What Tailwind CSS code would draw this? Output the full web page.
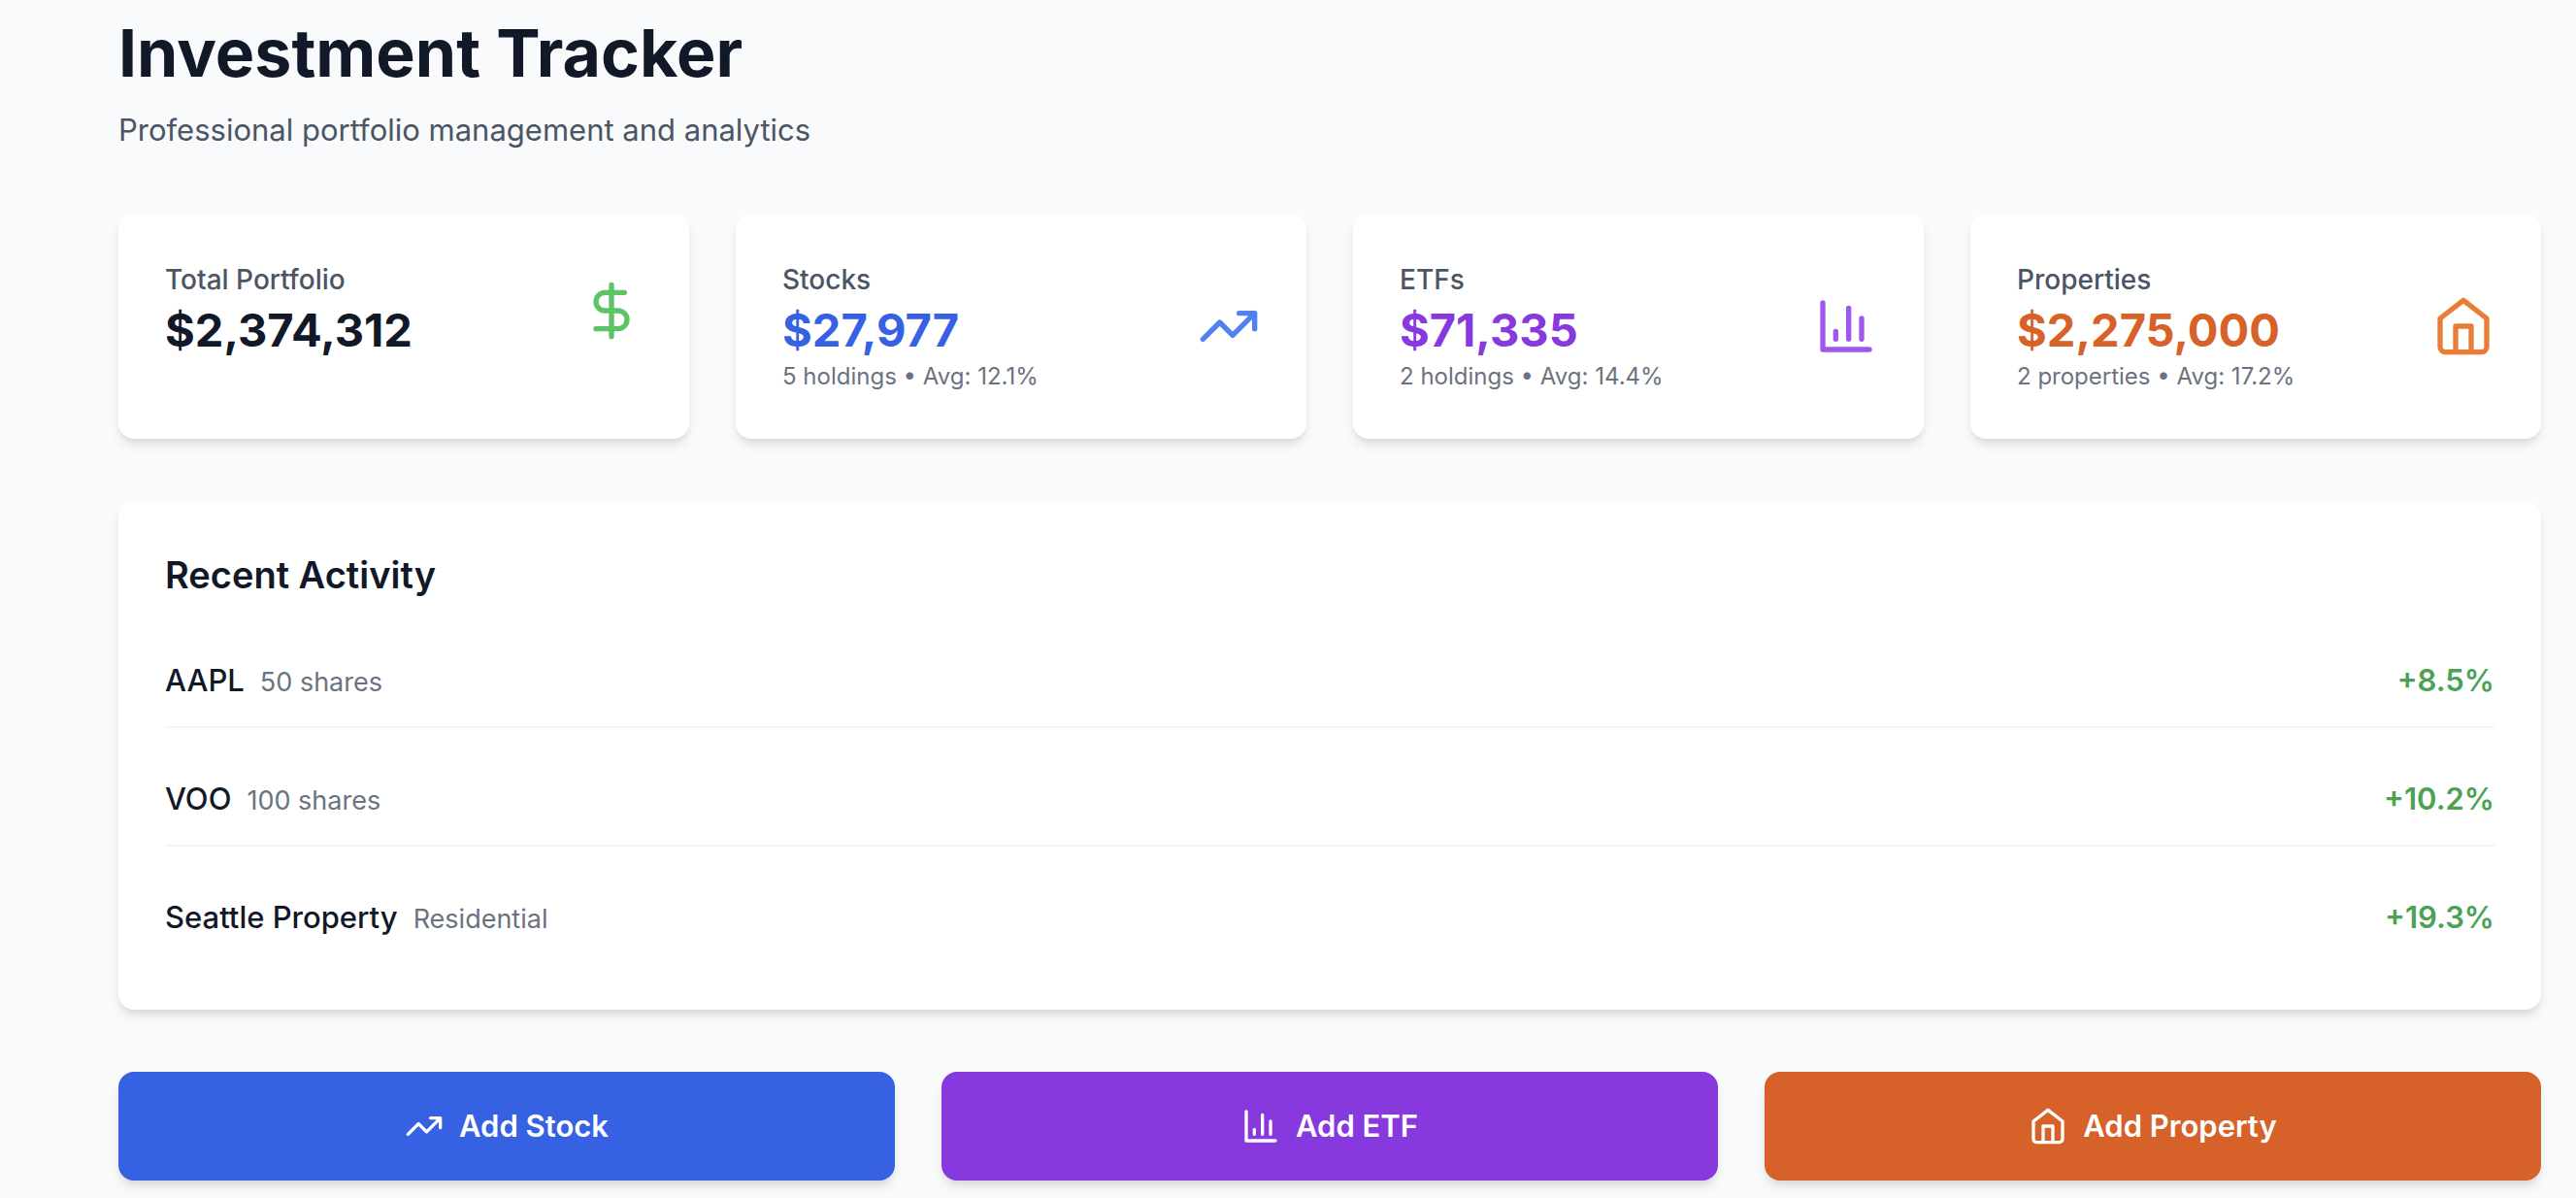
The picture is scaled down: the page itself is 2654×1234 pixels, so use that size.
<!DOCTYPE html>
<html lang="en">
<head>
<meta charset="utf-8">
<meta name="viewport" content="width=device-width, initial-scale=1">
<title>Investment Tracker</title>
<script src="https://cdn.jsdelivr.net/npm/@tailwindcss/browser@4"></script>
</head>
<body class="min-h-screen bg-[#f9fafc] font-['Inter',sans-serif] text-[#111827]">
<svg class="hidden" aria-hidden="true">
  <symbol id="dollar" viewBox="0 0 24 24"><path d="M12 2v20M17 5H9.500a3.500 3.500 0 0 0 0 7h5a3.500 3.500 0 0 1 0 7H6"/></symbol>
  <symbol id="trend" viewBox="0 0 24 24"><path d="M22 7l-8.500 8.500-5-5L2 17M16 7h6v6"/></symbol>
  <symbol id="chart" viewBox="0 0 24 24"><path d="M3 3v18h18M18 17V9M13 17V5M8 17v-3"/></symbol>
  <symbol id="home" viewBox="0 0 24 24"><path d="m3 9 9-7 9 7v11a2 2 0 0 1-2 2H5a2 2 0 0 1-2-2zM9 22V12h6v10"/></symbol>
</svg>
<main class="pt-[14px] pr-9 pb-4 pl-[122px]">
  <header class="mb-[62px]">
    <h1 class="mb-4 text-[68px] leading-[80px] font-bold">Investment Tracker</h1>
    <p class="text-[31px] leading-[48px] text-[#4b5563]">Professional portfolio management and analytics</p>
  </header>

  <section class="mb-16 grid grid-cols-4 gap-12" aria-label="Portfolio summary">
    <article class="rounded-2xl bg-white p-12 shadow-[0_8px_12px_-2px_rgb(0_0_0/0.1),0_4px_8px_-4px_rgb(0_0_0/0.1)]">
      <div class="flex items-center justify-between">
        <div>
          <h2 class="text-[28px] leading-[40px] font-medium text-[#4b5563]">Total Portfolio</h2>
          <p class="text-[47px] leading-[64px] font-bold">$2,374,312</p>
        </div>
        <svg class="size-16 fill-none stroke-[#5dc367] stroke-2 [stroke-linecap:round] [stroke-linejoin:round]" aria-hidden="true"><use href="#dollar"/></svg>
      </div>
    </article>
    <article class="rounded-2xl bg-white p-12 shadow-[0_8px_12px_-2px_rgb(0_0_0/0.1),0_4px_8px_-4px_rgb(0_0_0/0.1)]">
      <div class="flex items-center justify-between">
        <div>
          <h2 class="text-[28px] leading-[40px] font-medium text-[#4b5563]">Stocks</h2>
          <p class="text-[47px] leading-[64px] font-bold text-[#3761e3]">$27,977</p>
          <p class="text-[24px] leading-[32px] text-[#6b7280]">5 holdings • Avg: 12.1%</p>
        </div>
        <svg class="size-16 fill-none stroke-[#4f81ef] stroke-2 [stroke-linecap:round] [stroke-linejoin:round]" aria-hidden="true"><use href="#trend"/></svg>
      </div>
    </article>
    <article class="rounded-2xl bg-white p-12 shadow-[0_8px_12px_-2px_rgb(0_0_0/0.1),0_4px_8px_-4px_rgb(0_0_0/0.1)]">
      <div class="flex items-center justify-between">
        <div>
          <h2 class="text-[28px] leading-[40px] font-medium text-[#4b5563]">ETFs</h2>
          <p class="text-[47px] leading-[64px] font-bold text-[#8839de]">$71,335</p>
          <p class="text-[24px] leading-[32px] text-[#6b7280]">2 holdings • Avg: 14.4%</p>
        </div>
        <svg class="size-16 fill-none stroke-[#9f57f1] stroke-2 [stroke-linecap:round] [stroke-linejoin:round]" aria-hidden="true"><use href="#chart"/></svg>
      </div>
    </article>
    <article class="rounded-2xl bg-white p-12 shadow-[0_8px_12px_-2px_rgb(0_0_0/0.1),0_4px_8px_-4px_rgb(0_0_0/0.1)]">
      <div class="flex items-center justify-between">
        <div>
          <h2 class="text-[28px] leading-[40px] font-medium text-[#4b5563]">Properties</h2>
          <p class="text-[47px] leading-[64px] font-bold text-[#d76229]">$2,275,000</p>
          <p class="text-[24px] leading-[32px] text-[#6b7280]">2 properties • Avg: 17.2%</p>
        </div>
        <svg class="size-16 fill-none stroke-[#e97d35] stroke-2 [stroke-linecap:round] [stroke-linejoin:round]" aria-hidden="true"><use href="#home"/></svg>
      </div>
    </article>
  </section>

  <section class="mb-16 rounded-2xl bg-white p-12 shadow-[0_8px_12px_-2px_rgb(0_0_0/0.1),0_4px_8px_-4px_rgb(0_0_0/0.1)]">
    <h2 class="mb-8 text-[38px] leading-[56px] font-semibold">Recent Activity</h2>
    <ul class="flex flex-col gap-6 text-[31px] leading-[48px] font-medium">
      <li class="flex items-center justify-between border-b-2 border-[#f3f4f6] pt-[25px] pb-[23px]">
        <div class="flex items-baseline gap-4"><span>AAPL</span><span class="text-[27px] leading-[40px] font-normal text-[#6b7280]">50 shares</span></div>
        <span class="font-semibold text-[#4ba254]">+8.5%</span>
      </li>
      <li class="flex items-center justify-between border-b-2 border-[#f3f4f6] pt-[25px] pb-[23px]">
        <div class="flex items-baseline gap-4"><span>VOO</span><span class="text-[27px] leading-[40px] font-normal text-[#6b7280]">100 shares</span></div>
        <span class="font-semibold text-[#4ba254]">+10.2%</span>
      </li>
      <li class="flex items-center justify-between pt-[25px] pb-[23px]">
        <div class="flex items-baseline gap-4"><span>Seattle Property</span><span class="text-[27px] leading-[40px] font-normal text-[#6b7280]">Residential</span></div>
        <span class="font-semibold text-[#4ba254]">+19.3%</span>
      </li>
    </ul>
  </section>

  <div class="grid grid-cols-3 gap-12">
    <button type="button" class="flex items-center justify-center gap-4 rounded-2xl bg-[#3761e3] p-8 text-[31px] leading-[48px] font-semibold text-white shadow-[0_8px_12px_-2px_rgb(0_0_0/0.1),0_4px_8px_-4px_rgb(0_0_0/0.1)]">
      <svg class="size-10 fill-none stroke-white stroke-2 [stroke-linecap:round] [stroke-linejoin:round]" aria-hidden="true"><use href="#trend"/></svg>Add Stock
    </button>
    <button type="button" class="flex items-center justify-center gap-4 rounded-2xl bg-[#8839de] p-8 text-[31px] leading-[48px] font-semibold text-white shadow-[0_8px_12px_-2px_rgb(0_0_0/0.1),0_4px_8px_-4px_rgb(0_0_0/0.1)]">
      <svg class="size-10 fill-none stroke-white stroke-2 [stroke-linecap:round] [stroke-linejoin:round]" aria-hidden="true"><use href="#chart"/></svg>Add ETF
    </button>
    <button type="button" class="flex items-center justify-center gap-4 rounded-2xl bg-[#d76229] p-8 text-[31px] leading-[48px] font-semibold text-white shadow-[0_8px_12px_-2px_rgb(0_0_0/0.1),0_4px_8px_-4px_rgb(0_0_0/0.1)]">
      <svg class="size-10 fill-none stroke-white stroke-2 [stroke-linecap:round] [stroke-linejoin:round]" aria-hidden="true"><use href="#home"/></svg>Add Property
    </button>
  </div>
</main>
</body>
</html>
